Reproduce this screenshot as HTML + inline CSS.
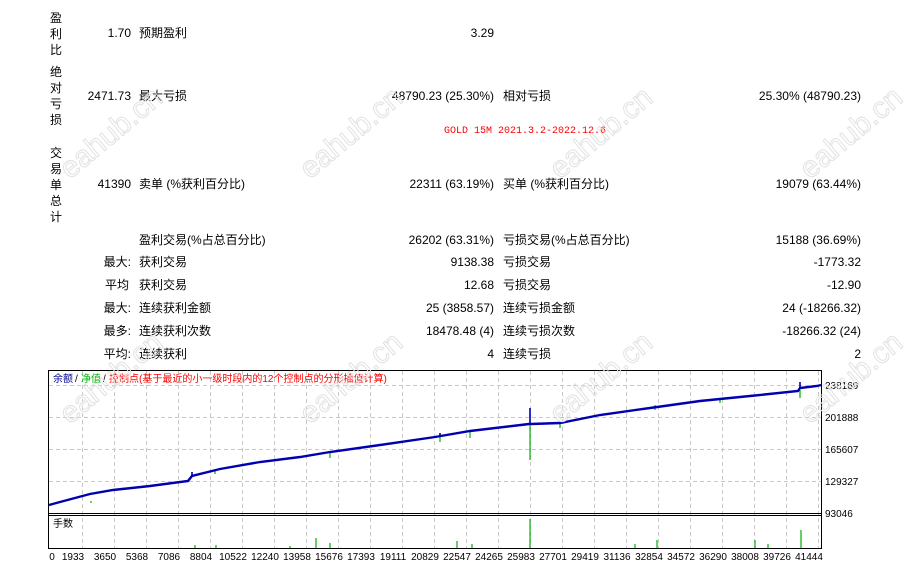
<!DOCTYPE html>
<html><head><meta charset="utf-8"><style>
body{margin:0;width:919px;height:570px;background:#fff;position:relative;overflow:hidden;font-family:"Liberation Sans","Noto Sans CJK SC",sans-serif;font-size:12px;color:#000}
.t{position:absolute;white-space:nowrap;line-height:14px}
.r{text-align:right}
.v{position:absolute;left:50px;width:14px;line-height:16px;font-size:12px}
</style></head><body>
<div class="v" style="top:10px">盈<br>利<br>比</div>
<div class="v" style="top:64px">绝<br>对<br>亏<br>损</div>
<div class="v" style="top:145px">交<br>易<br>单<br>总<br>计</div>

<div class="t r" style="right:788px;top:26px">1.70</div>
<div class="t" style="left:139px;top:26px">预期盈利</div>
<div class="t r" style="right:425px;top:26px">3.29</div>

<div class="t r" style="right:788px;top:89px">2471.73</div>
<div class="t" style="left:139px;top:89px">最大亏损</div>
<div class="t r" style="right:425px;top:89px">48790.23 (25.30%)</div>
<div class="t" style="left:503px;top:89px">相对亏损</div>
<div class="t r" style="right:58px;top:89px">25.30% (48790.23)</div>

<div class="t" style="left:444px;top:125px;color:#f00;font-family:'Liberation Mono','Noto Sans CJK SC',monospace;font-size:10px">GOLD 15M 2021.3.2-2022.12.6</div>

<div class="t r" style="right:788px;top:177px">41390</div>
<div class="t" style="left:139px;top:177px">卖单 (%获利百分比)</div>
<div class="t r" style="right:425px;top:177px">22311 (63.19%)</div>
<div class="t" style="left:503px;top:177px">买单 (%获利百分比)</div>
<div class="t r" style="right:58px;top:177px">19079 (63.44%)</div>

<div class="t" style="left:139px;top:233px">盈利交易(%占总百分比)</div>
<div class="t r" style="right:425px;top:233px">26202 (63.31%)</div>
<div class="t" style="left:503px;top:233px">亏损交易(%占总百分比)</div>
<div class="t r" style="right:58px;top:233px">15188 (36.69%)</div>

<div class="t r" style="right:788px;top:255px">最大:</div>
<div class="t" style="left:139px;top:255px">获利交易</div>
<div class="t r" style="right:425px;top:255px">9138.38</div>
<div class="t" style="left:503px;top:255px">亏损交易</div>
<div class="t r" style="right:58px;top:255px">-1773.32</div>

<div class="t r" style="right:790px;top:278px">平均</div>
<div class="t" style="left:139px;top:278px">获利交易</div>
<div class="t r" style="right:425px;top:278px">12.68</div>
<div class="t" style="left:503px;top:278px">亏损交易</div>
<div class="t r" style="right:58px;top:278px">-12.90</div>

<div class="t r" style="right:788px;top:301px">最大:</div>
<div class="t" style="left:139px;top:301px">连续获利金额</div>
<div class="t r" style="right:425px;top:301px">25 (3858.57)</div>
<div class="t" style="left:503px;top:301px">连续亏损金额</div>
<div class="t r" style="right:58px;top:301px">24 (-18266.32)</div>

<div class="t r" style="right:788px;top:324px">最多:</div>
<div class="t" style="left:139px;top:324px">连续获利次数</div>
<div class="t r" style="right:425px;top:324px">18478.48 (4)</div>
<div class="t" style="left:503px;top:324px">连续亏损次数</div>
<div class="t r" style="right:58px;top:324px">-18266.32 (24)</div>

<div class="t r" style="right:788px;top:347px">平均:</div>
<div class="t" style="left:139px;top:347px">连续获利</div>
<div class="t r" style="right:425px;top:347px">4</div>
<div class="t" style="left:503px;top:347px">连续亏损</div>
<div class="t r" style="right:58px;top:347px">2</div>

<svg width="919" height="570" style="position:absolute;left:0;top:0" xmlns="http://www.w3.org/2000/svg">
<g stroke="#c8c8c8" stroke-dasharray="4,3" stroke-width="1">
<path d="M82.5 371V548M114.5 371V548M146.5 371V548M178.5 371V548M210.5 371V548M242.5 371V548M274.5 371V548M306.5 371V548M338.5 371V548M370.5 371V548M402.5 371V548M434.5 371V548M466.5 371V548M498.5 371V548M530.5 371V548M562.5 371V548M594.5 371V548M626.5 371V548M658.5 371V548M690.5 371V548M722.5 371V548M754.5 371V548M786.5 371V548M818.5 371V548"/>
<path d="M49 385.5H821M49 417.5H821M49 449.5H821M49 481.5H821"/>
</g>
<rect x="48.5" y="370.5" width="773" height="178" fill="none" stroke="#000"/>
<path d="M48 513.5H822M48 515.5H822" stroke="#000"/>
<g stroke="#00b000" stroke-width="1.2">
<path d="M530 424V460M800 390V398M330 452V458M440 436V442M470 431V438M560 423V428M655 405V410M720 400V403M91 501V503M215 470V474"/>
<path d="M530 519V548M801 530V548M216 545V548M457 541V548M472 544V548M635 544V548M657 540V548M755 540V548M768 544V548M330 543V548M316 538V548M290 546V548M195 545V548"/>
</g>
<polyline fill="none" stroke="#0000b0" stroke-width="2.4" points="49,505 60,502 75,498 90,494 113,490 150,486 188,481 192,476 220,469 260,462 300,457 330,452 380,445 435,437 470,431 529,424 531,424 560,423 600,415 650,408 700,401 750,396 798,391 800,388 817,386 821,385"/>
<path d="M530 424V408M800 388V382M192 476V472M440 437V433" stroke="#0000b0" stroke-width="1.6"/>
<g font-size="10" font-family="Liberation Sans,Noto Sans CJK SC,sans-serif">
<text x="53" y="382" fill="#00008b">余额</text><text x="75" y="382" fill="#000">/</text>
<text x="81" y="382" fill="#00b000">净值</text><text x="103" y="382" fill="#000">/</text>
<text x="109" y="382" fill="#f00">控制点(基于最近的小一级时段内的12个控制点的分形插值计算)</text>
<text x="53" y="527" fill="#000">手数</text>
</g>
<g font-size="10" font-family="Liberation Sans,sans-serif" fill="#000">
<text x="825" y="389">238169</text><text x="825" y="421">201888</text><text x="825" y="453">165607</text><text x="825" y="485">129327</text><text x="825" y="517">93046</text>
</g>
<g font-size="10" font-family="Liberation Sans,sans-serif" fill="#000" text-anchor="middle">
<text x="52" y="560">0</text><text x="73" y="560">1933</text><text x="105" y="560">3650</text><text x="137" y="560">5368</text><text x="169" y="560">7086</text><text x="201" y="560">8804</text><text x="233" y="560">10522</text><text x="265" y="560">12240</text><text x="297" y="560">13958</text><text x="329" y="560">15676</text><text x="361" y="560">17393</text><text x="393" y="560">19111</text><text x="425" y="560">20829</text><text x="457" y="560">22547</text><text x="489" y="560">24265</text><text x="521" y="560">25983</text><text x="553" y="560">27701</text><text x="585" y="560">29419</text><text x="617" y="560">31136</text><text x="649" y="560">32854</text><text x="681" y="560">34572</text><text x="713" y="560">36290</text><text x="745" y="560">38008</text><text x="777" y="560">39726</text><text x="809" y="560">41444</text>
</g>
<g font-size="30" font-family="Liberation Sans,sans-serif" fill="none" stroke="#e2e2e2" stroke-width="1">
<text transform="translate(70,180) rotate(-40)">eahub.cn</text>
<text transform="translate(310,180) rotate(-40)">eahub.cn</text>
<text transform="translate(560,180) rotate(-40)">eahub.cn</text>
<text transform="translate(810,180) rotate(-40)">eahub.cn</text>
<text transform="translate(70,425) rotate(-40)">eahub.cn</text>
<text transform="translate(310,425) rotate(-40)">eahub.cn</text>
<text transform="translate(560,425) rotate(-40)">eahub.cn</text>
<text transform="translate(810,425) rotate(-40)">eahub.cn</text>
</g>
</svg>
</body></html>
